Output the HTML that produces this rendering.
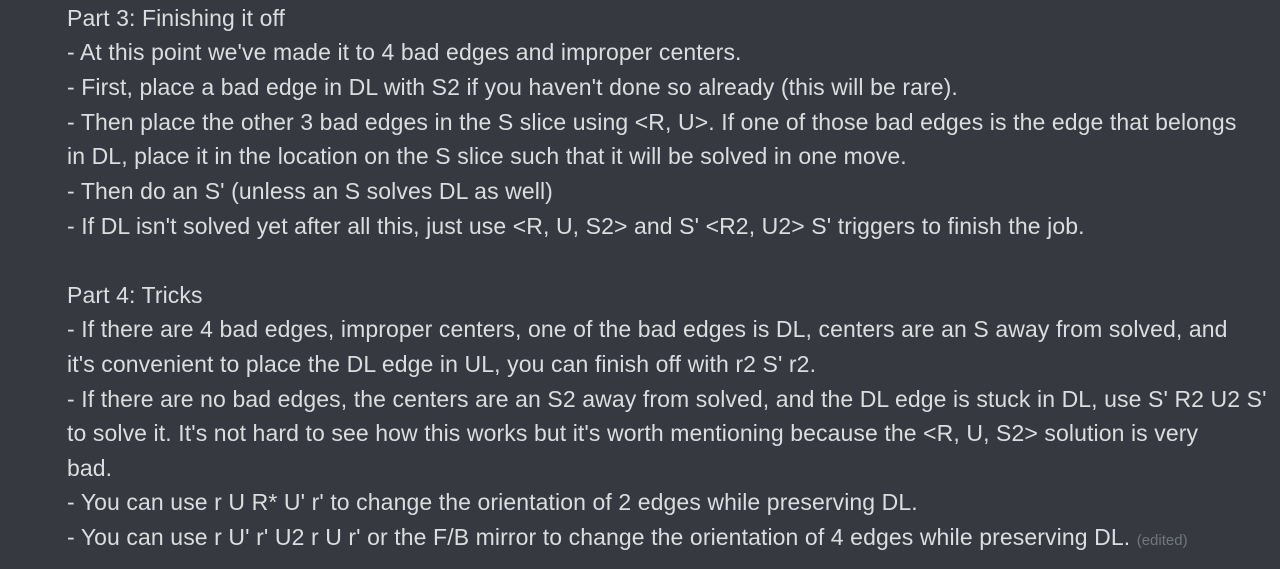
<!DOCTYPE html>
<html><head><meta charset="utf-8"><style>
html,body{margin:0;padding:0;background:#36393f;width:1280px;height:569px;overflow:hidden}
.w{position:absolute;left:67px;top:0;font-family:"Liberation Sans",sans-serif;font-size:23px;letter-spacing:0.1px;color:#dcddde}
.l{position:absolute;left:0;white-space:nowrap;line-height:30px}
.e{font-size:15px;color:#72767d;letter-spacing:0}
</style></head><body><div class="w">
<div class="l" style="top:3px">Part 3: Finishing it off</div>
<div class="l" style="top:37px">- At this point we've made it to 4 bad edges and improper centers.</div>
<div class="l" style="top:72px">- First, place a bad edge in DL with S2 if you haven't done so already (this will be rare).</div>
<div class="l" style="top:107px">- Then place the other 3 bad edges in the S slice using &lt;R, U&gt;. If one of those bad edges is the edge that belongs</div>
<div class="l" style="top:141px">in DL, place it in the location on the S slice such that it will be solved in one move.</div>
<div class="l" style="top:176px">- Then do an S' (unless an S solves DL as well)</div>
<div class="l" style="top:211px">- If DL isn't solved yet after all this, just use &lt;R, U, S2&gt; and S' &lt;R2, U2&gt; S' triggers to finish the job.</div>
<div class="l" style="top:280px">Part 4: Tricks</div>
<div class="l" style="top:314px">- If there are 4 bad edges, improper centers, one of the bad edges is DL, centers are an S away from solved, and</div>
<div class="l" style="top:349px">it's convenient to place the DL edge in UL, you can finish off with r2 S' r2.</div>
<div class="l" style="top:384px">- If there are no bad edges, the centers are an S2 away from solved, and the DL edge is stuck in DL, use S' R2 U2 S'</div>
<div class="l" style="top:418px">to solve it. It's not hard to see how this works but it's worth mentioning because the &lt;R, U, S2&gt; solution is very</div>
<div class="l" style="top:453px">bad.</div>
<div class="l" style="top:487px">- You can use r U R* U' r' to change the orientation of 2 edges while preserving DL.</div>
<div class="l" style="top:522px">- You can use r U' r' U2 r U r' or the F/B mirror to change the orientation of 4 edges while preserving DL. <span class="e">(edited)</span></div>
</div></body></html>
